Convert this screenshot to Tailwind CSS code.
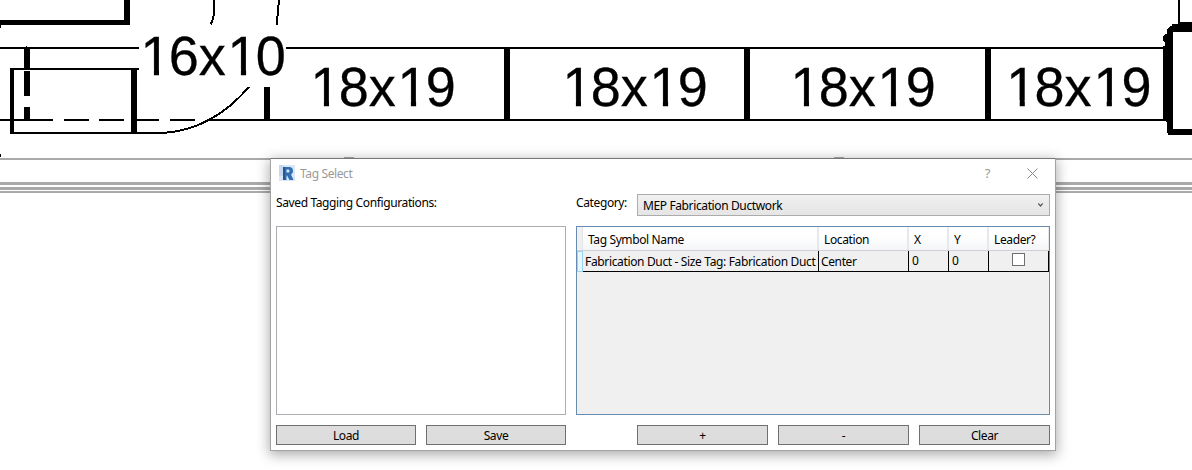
<!DOCTYPE html>
<html lang="en">
<head>
<meta charset="utf-8">
<title>Tag Select</title>
<script src="https://cdn.jsdelivr.net/npm/@tailwindcss/browser@4"></script>
</head>
<body class="w-[1192px] h-[470px] overflow-hidden bg-white relative">
<svg class="absolute inset-0" width="1192" height="470" viewBox="0 0 1192 470" shape-rendering="crispEdges">
  <defs>
    <!-- trims the base serif beside each "1" stem -->
    <g id="trim" fill="#fff"><path d="M5 -5.200H15.200V2H5zM20.300 -5.200H30.500V2H20.300zM92 -5.200H102.200V2H92zM107.400 -5.200H117.500V2H107.400z"/></g>
  </defs>
  <g fill="#a9a9a9">
    <rect x="0" y="158" width="1192" height="2"/>
    <rect x="0" y="182" width="1192" height="3"/>
    <rect x="0" y="187" width="1192" height="3"/>
    <rect x="0" y="191" width="1192" height="2"/>
    <rect x="344" y="157" width="10" height="2"/>
    <rect x="834" y="157" width="10" height="2"/>
  </g>
  <g fill="#000">
    <rect x="0" y="20" width="129" height="5"/><rect x="124" y="0" width="6" height="25"/><rect x="0" y="25" width="1" height="3"/>
    <rect x="0" y="47" width="139" height="2"/><rect x="286" y="47" width="879" height="2"/>
    <rect x="24" y="47" width="6" height="22"/><rect x="24" y="71" width="6" height="25"/><rect x="24" y="107" width="6" height="13"/><rect x="26" y="46" width="1" height="2"/>
    <rect x="10" y="68" width="129" height="2"/><rect x="10" y="68" width="4" height="66"/><rect x="131" y="68" width="6" height="65"/><rect x="10" y="132" width="156" height="2"/>
    <rect x="0" y="119" width="53" height="2"/><rect x="64" y="119" width="25" height="2"/><rect x="99" y="119" width="25" height="2"/><rect x="137" y="119" width="22" height="2"/><rect x="170" y="119" width="25" height="2"/><rect x="208" y="119" width="957" height="2"/>
    <rect x="264" y="87" width="6" height="33"/><rect x="504" y="48" width="6" height="72"/><rect x="744" y="48" width="6" height="72"/><rect x="985" y="47" width="6" height="73"/>
    <rect x="0" y="154" width="1" height="3"/>
    <rect x="1178" y="0" width="2" height="24"/>
    <path d="M1163 46h2v-3l-2-3v-4l2-2h2v-5l3-3h2v-2h7v-2h13v10h-19v97h19v6h-24v-2h-1v-10l-2-2h-2z"/>
  </g>
  <g fill="none" stroke="#000" stroke-width="2">
    <path d="M214 0V12Q213.500 20 210.500 24.500M279 0L277.800 12L276.800 25"/>
    <path d="M163 133C195 131 223 117 249 87"/>
  </g>
  <g fill="#000" stroke="#000" stroke-width=".3" font-family="Liberation Sans, Arial, sans-serif" font-size="54" shape-rendering="auto">
    <g transform="translate(138.700 74.600) scale(1 1.035)"><text x="1.800 30 60 88.900 117">16x10</text><use href="#trim" stroke="none"/></g>
    <g transform="translate(308.700 105.600) scale(1 1.035)"><text x="1.800 30 60 88.900 117">18x19</text><use href="#trim" stroke="none"/></g>
    <g transform="translate(560.700 105.600) scale(1 1.035)"><text x="1.800 30 60 88.900 117">18x19</text><use href="#trim" stroke="none"/></g>
    <g transform="translate(788.700 105.600) scale(1 1.035)"><text x="1.800 30 60 88.900 117">18x19</text><use href="#trim" stroke="none"/></g>
    <g transform="translate(1004.500 105.600) scale(1 1.035)"><text x="1.800 30 60 88.900 117">18x19</text><use href="#trim" stroke="none"/></g>
  </g>
</svg>

<main class="absolute left-[270px] top-[158px] w-[786px] h-[293px] bg-white border border-[#a3a3a3] border-t-[#777] shadow-[0_3px_12px_1px_rgba(0,0,0,0.33)] font-['Noto_Sans',sans-serif] text-[12px] leading-4 tracking-[-0.38px] text-black flex flex-col">
  <header class="h-[28px] mb-[2px] flex items-center pl-2 pr-[17px] text-[#999]">
    <svg width="16" height="16" viewBox="0 0 16 16"><rect width="16" height="16" fill="#dbe7f6"/><path d="M0 0h5v11H0z" fill="#c5d8ef"/><path d="M4 2H10q4 0 4 4q0 2.500-2 3.500L14.500 15h-4L8 10.500H7.500V15H4zM7.500 4.500v3h2q1 0 1-1.500t-1-1.500z" fill="#2f6fb5" fill-rule="evenodd"/><path d="M4 2H6v13H4z" fill="#235894"/></svg>
    <h1 class="ml-[5px] mt-[2px]">Tag Select</h1>
    <span class="ml-auto text-[13px]">?</span>
    <svg class="ml-[37px]" width="11" height="11" viewBox="0 0 11 11" stroke="#888" fill="none"><path d="M.5 .5l10 10M10.500 .5l-10 10"/></svg>
  </header>
  <div class="flex px-[5px] gap-[10px]">
    <section class="w-[290px] flex flex-col">
      <p class="h-[37px] pt-[6px]">Saved Tagging Configurations:</p>
      <div class="h-[189px] border border-[#abadb3]"></div>
      <div class="flex gap-[10px] mt-[10px]">
        <button class="w-[140px] h-5 bg-[#ddd] border border-[#707070] leading-[20px]">Load</button>
        <button class="w-[140px] h-5 bg-[#ddd] border border-[#707070] leading-[20px]">Save</button>
      </div>
    </section>
    <section class="w-[474px] flex flex-col">
      <div class="h-[37px] flex">
        <label class="w-[61px] pt-[6px]">Category:</label>
        <div class="w-[413px] h-[22px] mt-[5px] border border-[#acacac] bg-linear-to-b from-[#f0f0f0] to-[#e5e5e5] flex items-center justify-between pl-[5px] pr-[6px]">
          <span class="pt-[2px]">MEP Fabrication Ductwork</span>
          <svg width="5" height="4" viewBox="0 0 5 4" fill="none" stroke="#555" stroke-width="1.200"><path d="M.3 .5L2.500 3L4.700 .5"/></svg>
        </div>
      </div>
      <div class="h-[189px] border border-[#688caf] bg-[#f0f0f0]">
        <div class="flex h-6 border-b border-[#d0d1d4] bg-linear-to-b from-white from-40% to-[#f3f5f8] leading-[26px]">
          <div class="w-[6px] bg-[#f0f0f0] border-r border-[#e3e4e6]"></div>
          <div class="w-[236px] pl-[5px] border-r-2 border-[#e6e8eb]">Tag Symbol Name</div>
          <div class="w-[90px] pl-[5px] border-r-2 border-[#e6e8eb]">Location</div>
          <div class="w-[40px] pl-[5px] border-r-2 border-[#e6e8eb]">X</div>
          <div class="w-[40px] pl-[5px] border-r-2 border-[#e6e8eb]">Y</div>
          <div class="w-[60px] pl-[5px] border-r border-[#e6e8eb]">Leader?</div>
        </div>
        <div class="flex h-[21px] leading-[22px]">
          <div class="w-[6px] border border-[#98d5f2] bg-[#e8f6fd]"></div>
          <div class="w-[236px] h-[21px] pl-[2px] border-r border-b border-black overflow-hidden whitespace-nowrap tracking-[-0.35px]">Fabrication Duct - Size Tag: Fabrication Duct</div>
          <div class="w-[90px] pl-[2px] border-r border-b border-black">Center</div>
          <div class="w-[40px] pl-[3px] border-r border-b border-black leading-[20px]">0</div>
          <div class="w-[40px] pl-[3px] border-r border-b border-black leading-[20px]">0</div>
          <div class="w-[60px] border-r border-b border-black flex justify-center pt-[2px]"><div class="size-[13px] bg-white border border-[#707070]"></div></div>
        </div>
      </div>
      <div class="flex gap-[10px] mt-[10px] ml-[61px]">
        <button class="w-[131px] h-5 bg-[#ddd] border border-[#707070] leading-[20px]">+</button>
        <button class="w-[131px] h-5 bg-[#ddd] border border-[#707070] leading-[20px]">-</button>
        <button class="w-[131px] h-5 bg-[#ddd] border border-[#707070] leading-[20px]">Clear</button>
      </div>
    </section>
  </div>
</main>
</body>
</html>
